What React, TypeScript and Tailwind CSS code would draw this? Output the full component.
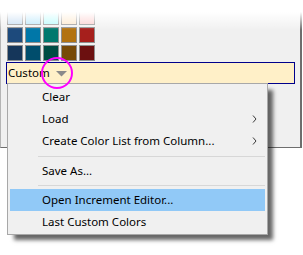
const rows: string[][] = [
  ['#c4dcf2', '#b6e6fb', '#b4fcfd', '#fde6c8', '#fccccc'],
  ['#1d4a7c', '#0077a8', '#00786e', '#b27210', '#a61f1c'],
  ['#15365a', '#004d6c', '#004c44', '#774a08', '#6c1010'],
];

function Chevron() {
  return (
    <svg width="5" height="8" viewBox="0 0 5 8" className="mr-[8px]">
      <path d="M1 0.5 L4 4 L1 7.5" fill="none" stroke="#3a3a3a" strokeWidth="1" />
    </svg>
  );
}

function MenuItem({ label, sub, active }: { label: string; sub?: boolean; active?: boolean }) {
  return (
    <div
      className={`mx-[2px] h-[22px] flex items-center justify-between pl-[32px] ${
        active ? 'bg-[#91c9f7]' : ''
      }`}
    >
      <span>{label}</span>
      {sub && <Chevron />}
    </div>
  );
}

function Separator({ wide }: { wide?: boolean }) {
  return (
    <div className={wide ? 'pt-[4px] pb-[3px]' : 'pt-[3px] pb-[3px]'}>
      <div className="ml-[30px] mr-[2px] h-px bg-[#d7d7d7]" />
    </div>
  );
}

export default function App() {
  return (
    <div className="relative w-[303px] h-[255px] bg-white overflow-hidden font-['Noto_Sans',sans-serif] text-[11.5px] text-black">
      <div className="h-[148px] w-[302px] bg-[#f0f0f0] border-l border-r-2 border-b border-l-[#b4b4b4] border-r-[#6e6e6e] border-b-[#6e6e6e] pt-[9px] pl-[6px]">
        <div className="flex flex-col gap-[2px]">
          {rows.map((row, i) => (
            <div key={i} className="flex gap-[2px]">
              {row.map((c) => (
                <div key={c} className="w-4 h-4 border border-[#8e8e8e]" style={{ backgroundColor: c }} />
              ))}
            </div>
          ))}
        </div>
        <div className="mt-px ml-[-1px] w-[289px] h-[22px] border border-[#00008b] bg-[#fff0c8] flex items-center pl-[1px] pb-[1px]">
          <span>Custom</span>
          <svg width="11" height="6" viewBox="0 0 11 6" className="ml-[6px] mt-[3px]">
            <path d="M0 0 L11 0 L5.5 5.5 Z" fill="#8a8a8a" />
          </svg>
        </div>
      </div>

      {/* dropdown menu */}
      <div className="absolute left-[7px] top-[83px] w-[261px] bg-[#f0f0f0] border border-[#a8a8a8] pt-[2px] pb-[1px] shadow-[6px_6px_4px_-1px_rgba(0,0,0,0.6)]">
        <MenuItem label="Clear" />
        <MenuItem label="Load" sub />
        <MenuItem label="Create Color List from Column..." sub />
        <Separator wide />
        <MenuItem label="Save As..." />
        <Separator />
        <MenuItem label="Open Increment Editor..." active />
        <MenuItem label="Last Custom Colors" />
      </div>

      {/* highlight ring */}
      <div className="absolute left-[41px] top-[57px] w-[32px] h-[32px] rounded-full border-2 border-[#ff00ff]" />

      {/* top fade */}
      <div className="absolute left-0 top-0 w-[302px] h-[30px] bg-gradient-to-b from-white from-40% to-transparent pointer-events-none" />
    </div>
  );
}
